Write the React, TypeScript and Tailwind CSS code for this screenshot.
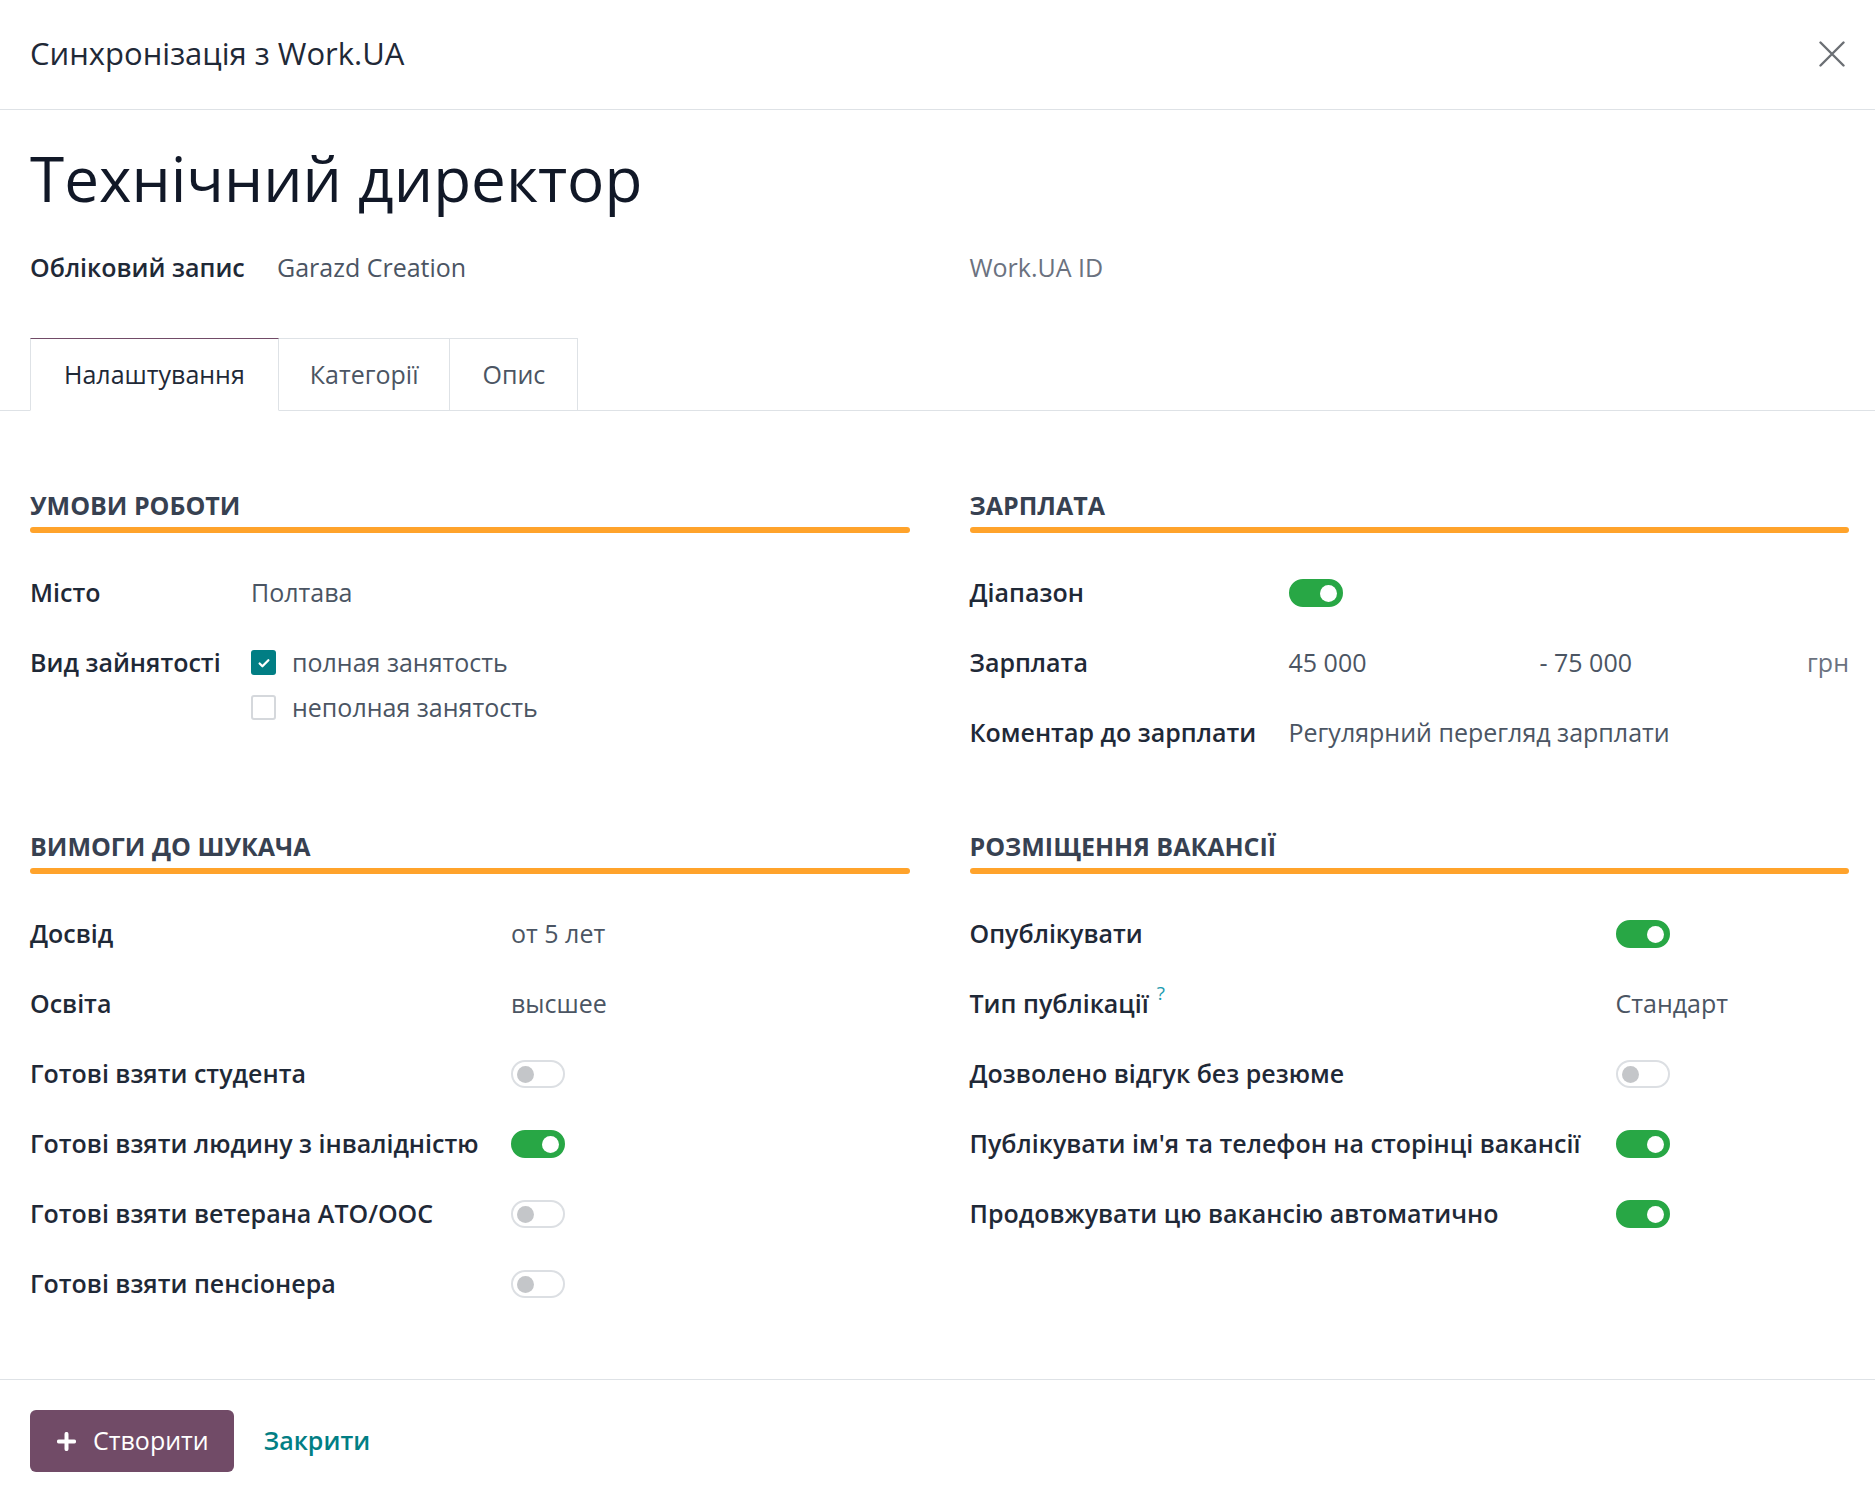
import React from 'react'

function Toggle({ on }: { on: boolean }) {
  if (on) {
    return (
      <span className="flex h-[28px] w-[54px] items-center justify-end rounded-full border-2 border-[#28a745] bg-[#28a745] px-[4px]">
        <span className="h-[17px] w-[17px] rounded-full bg-white" />
      </span>
    )
  }
  return (
    <span className="flex h-[28px] w-[54px] items-center justify-start rounded-full border-2 border-[#dcdfe3] bg-white px-[4px]">
      <span className="h-[17px] w-[17px] rounded-full bg-[#c4c6c9]" />
    </span>
  )
}

function Checkbox({ checked }: { checked: boolean }) {
  if (checked) {
    return (
      <span className="flex h-[25px] w-[25px] items-center justify-center rounded-[3px] bg-[#017e84]">
        <svg width="14" height="14" viewBox="0 0 16 16" fill="none">
          <path d="M3 8.5l3.2 3.2L13 4.8" stroke="white" strokeWidth="2.6" strokeLinecap="round" strokeLinejoin="round" />
        </svg>
      </span>
    )
  }
  return <span className="h-[25px] w-[25px] rounded-[3px] border-2 border-[#d5d8dc] bg-white" />
}

function Section({ title, children }: { title: string; children: React.ReactNode }) {
  return (
    <div>
      <div className="flex h-[34px] items-center text-[25px] font-bold uppercase text-[#374151]">{title}</div>
      <div className="mt-[4px] h-[6px] rounded-full bg-[#ffa32b]" />
      <div className="mt-[25px]">{children}</div>
    </div>
  )
}

function Row({ label, width, children }: { label: React.ReactNode; width: string; children?: React.ReactNode }) {
  return (
    <div className="flex h-[70px] items-center">
      <div className={`${width} shrink-0 text-[25px] font-semibold text-[#1f2937]`}>{label}</div>
      <div className="flex flex-1 items-center text-[25px] text-[#4b5563]">{children}</div>
    </div>
  )
}

export default function App() {
  return (
    <div className="min-h-screen bg-white font-['Open_Sans',sans-serif]">
      {/* header */}
      <div className="flex h-[110px] items-center justify-between border-b border-[#dee2e6] pb-[2px] pl-[30px] pr-[28px]">
        <h4 className="text-[31px] text-[#1f2937]">Синхронізація з Work.UA</h4>
        <button className="flex h-[30px] w-[30px] items-center justify-center">
          <svg width="26" height="26" viewBox="0 0 26 26" fill="none">
            <path d="M1.5 1.5l23 23M24.5 1.5l-23 23" stroke="#6b6f74" strokeWidth="2.4" strokeLinecap="round" />
          </svg>
        </button>
      </div>

      {/* title */}
      <div className="mt-[28px] flex h-[80px] items-center px-[30px]">
        <h1 className="text-[62px] leading-none text-[#111827]">Технічний директор</h1>
      </div>

      <div className="mt-[30px] grid h-[40px] grid-cols-2 gap-x-[60px] pl-[30px] pr-[26px]">
        <div className="flex items-center">
          <span className="w-[247px] shrink-0 text-[25px] font-semibold text-[#1f2937]">Обліковий запис</span>
          <span className="text-[25px] text-[#4b5563]">Garazd Creation</span>
        </div>
        <div className="flex items-center text-[25px] text-[#6b7280]">Work.UA ID</div>
      </div>

      {/* tabs */}
      <div className="mt-[50px] flex border-b border-[#dee2e6] pl-[30px]">
        <div className="-mb-px flex h-[73px] items-center border border-[#dee2e6] border-t-[#714b67] border-b-white bg-white px-[33px] text-[25px] text-[#1f2937]">
          Налаштування
        </div>
        <div className="flex h-[72px] items-center border-t border-r border-[#dee2e6] px-[31px] text-[25px] text-[#4b5563]">
          Категорії
        </div>
        <div className="flex h-[72px] items-center border-t border-r border-[#dee2e6] px-[32px] text-[25px] text-[#4b5563]">
          Опис
        </div>
      </div>

      {/* groups */}
      <div className="grid grid-cols-2 gap-x-[60px] pl-[30px] pr-[26px] pt-[78px]">
        <Section title="Умови роботи">
          <Row label="Місто" width="w-[221px]">Полтава</Row>
          <div className="flex items-start pt-[12px]">
            <div className="flex h-[45px] w-[221px] shrink-0 items-center text-[25px] font-semibold text-[#1f2937]">
              Вид зайнятості
            </div>
            <div className="text-[25px] text-[#4b5563]">
              <div className="flex h-[45px] items-center gap-[16px]">
                <Checkbox checked />
                <span>полная занятость</span>
              </div>
              <div className="flex h-[45px] items-center gap-[16px]">
                <Checkbox checked={false} />
                <span>неполная занятость</span>
              </div>
            </div>
          </div>
        </Section>
        <Section title="Зарплата">
          <Row label="Діапазон" width="w-[319px]">
            <Toggle on />
          </Row>
          <Row label="Зарплата" width="w-[319px]">
            <span className="w-[251px] shrink-0">45 000</span>
            <span className="flex-1">- 75 000</span>
            <span className="text-[#6b7280]">грн</span>
          </Row>
          <Row label="Коментар до зарплати" width="w-[319px]">Регулярний перегляд зарплати</Row>
        </Section>
      </div>

      <div className="mt-[62px] grid grid-cols-2 gap-x-[60px] pl-[30px] pr-[26px]">
        <Section title="Вимоги до шукача">
          <Row label="Досвід" width="w-[481px]">от 5 лет</Row>
          <Row label="Освіта" width="w-[481px]">высшее</Row>
          <Row label="Готові взяти студента" width="w-[481px]">
            <Toggle on={false} />
          </Row>
          <Row label="Готові взяти людину з інвалідністю" width="w-[481px]">
            <Toggle on />
          </Row>
          <Row label="Готові взяти ветерана АТО/ООС" width="w-[481px]">
            <Toggle on={false} />
          </Row>
          <Row label="Готові взяти пенсіонера" width="w-[481px]">
            <Toggle on={false} />
          </Row>
        </Section>
        <Section title="Розміщення вакансії">
          <Row label="Опублікувати" width="w-[646px]">
            <Toggle on />
          </Row>
          <Row
            label={
              <span className="flex items-start">
                Тип публікації
                <span className="ml-[8px] -mt-[6px] text-[19px] font-normal text-[#1a9bb0]">?</span>
              </span>
            }
            width="w-[646px]"
          >
            Стандарт
          </Row>
          <Row label="Дозволено відгук без резюме" width="w-[646px]">
            <Toggle on={false} />
          </Row>
          <Row label="Публікувати ім'я та телефон на сторінці вакансії" width="w-[646px]">
            <Toggle on />
          </Row>
          <Row label="Продовжувати цю вакансію автоматично" width="w-[646px]">
            <Toggle on />
          </Row>
        </Section>
      </div>

      {/* footer */}
      <div className="mt-[60px] flex items-center gap-[30px] border-t border-[#dee2e6] px-[30px] pb-[27px] pt-[30px]">
        <button className="flex h-[62px] items-center gap-[17px] rounded-[6px] bg-[#714b67] pl-[27px] pr-[25px] text-[25px] text-white">
          <svg width="19" height="19" viewBox="0 0 20 20">
            <path d="M10 2v16M2 10h16" stroke="white" strokeWidth="4.2" strokeLinecap="round" />
          </svg>
          <span>Створити</span>
        </button>
        <button className="text-[25px] font-semibold text-[#017e84]">Закрити</button>
      </div>
    </div>
  )
}
